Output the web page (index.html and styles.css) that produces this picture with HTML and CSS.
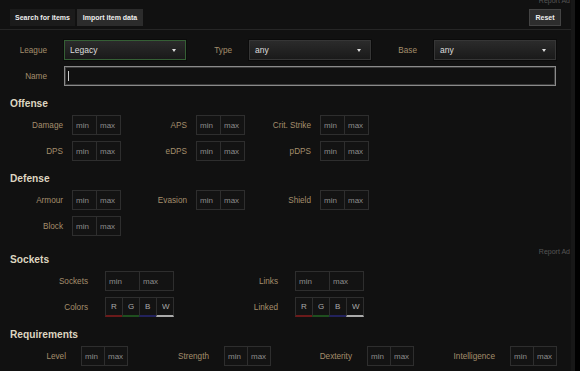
FILE: index.html
```html
<!DOCTYPE html>
<html lang="en">
  <head>
    <meta charset="UTF-8" />
    <meta name="viewport" content="width=device-width, initial-scale=1.0" />
    <title>Item search</title>
    <link rel="stylesheet" href="styles.css">
  </head>
  <body>
    <div class="page">

      <div class="ad ad-top">Report Ad</div>

      <div class="header">
        <div class="tabs">
          <div class="tab">Search for items</div>
          <div class="tab active">Import item data</div>
        </div>
        <button class="reset">Reset</button>
      </div>

      <!-- league / type / base -->
      <div class="filters">
        <div class="field">
          <div class="label">League</div>
          <div class="select selected">Legacy</div>
        </div>
        <div class="field">
          <div class="label">Type</div>
          <div class="select">any</div>
        </div>
        <div class="field">
          <div class="label">Base</div>
          <div class="select">any</div>
        </div>
      </div>

      <div class="field name">
        <div class="label">Name</div>
        <div class="text"><span class="caret"></span></div>
      </div>

      <!--offense-->
      <h2>Offense</h2>
      <div class="stats three">
        <div class="stat"><div class="label">Damage</div><div class="range"><input placeholder="min"><input placeholder="max"></div></div>
        <div class="stat"><div class="label">APS</div><div class="range"><input placeholder="min"><input placeholder="max"></div></div>
        <div class="stat"><div class="label">Crit. Strike</div><div class="range"><input placeholder="min"><input placeholder="max"></div></div>
      </div>
      <div class="stats three">
        <div class="stat"><div class="label">DPS</div><div class="range"><input placeholder="min"><input placeholder="max"></div></div>
        <div class="stat"><div class="label">eDPS</div><div class="range"><input placeholder="min"><input placeholder="max"></div></div>
        <div class="stat"><div class="label">pDPS</div><div class="range"><input placeholder="min"><input placeholder="max"></div></div>
      </div>

      <!--defense-->
      <h2>Defense</h2>
      <div class="stats three">
        <div class="stat"><div class="label">Armour</div><div class="range"><input placeholder="min"><input placeholder="max"></div></div>
        <div class="stat"><div class="label">Evasion</div><div class="range"><input placeholder="min"><input placeholder="max"></div></div>
        <div class="stat"><div class="label">Shield</div><div class="range"><input placeholder="min"><input placeholder="max"></div></div>
      </div>
      <div class="stats three">
        <div class="stat"><div class="label">Block</div><div class="range"><input placeholder="min"><input placeholder="max"></div></div>
      </div>

      <!--sockets-->
      <div class="ad ad-mid">Report Ad</div>
      <h2 class="after-ad">Sockets</h2>
      <div class="stats two">
        <div class="stat"><div class="label">Sockets</div><div class="range"><input placeholder="min"><input placeholder="max"></div></div>
        <div class="stat"><div class="label">Links</div><div class="range"><input placeholder="min"><input placeholder="max"></div></div>
      </div>
      <div class="stats two">
        <div class="stat">
          <div class="label">Colors</div>
          <div class="range colors"><input class="r" placeholder="R"><input class="g" placeholder="G"><input class="b" placeholder="B"><input class="w" placeholder="W"></div>
        </div>
        <div class="stat">
          <div class="label">Linked</div>
          <div class="range colors"><input class="r" placeholder="R"><input class="g" placeholder="G"><input class="b" placeholder="B"><input class="w" placeholder="W"></div>
        </div>
      </div>

      <!--requirements-->
      <h2>Requirements</h2>
      <div class="stats four">
        <div class="stat"><div class="label">Level</div><div class="range"><input placeholder="min"><input placeholder="max"></div></div>
        <div class="stat"><div class="label">Strength</div><div class="range"><input placeholder="min"><input placeholder="max"></div></div>
        <div class="stat"><div class="label">Dexterity</div><div class="range"><input placeholder="min"><input placeholder="max"></div></div>
        <div class="stat"><div class="label">Intelligence</div><div class="range"><input placeholder="min"><input placeholder="max"></div></div>
      </div>

    </div>
  </body>
</html>
```

FILE: styles.css
```css
body {
  margin: 0;
  background-color: #000;
  font-family: "Liberation Sans", Arial, sans-serif;
}
.page {
  width: 571px;
  height: 371px;
  overflow: hidden;
  background-color: #111;
  border-right: 4px solid #171717;
}

.ad {
  height: 7px;
  text-align: right;
  padding-right: 1px;
  font-size: 7px;
  line-height: 10px;
  color: #555;
}
.ad-top {
  height: 9px;
  line-height: 2px;
}
.ad-mid {
  margin-top: 11px;
}

.header {
  display: flex;
  justify-content: space-between;
  align-items: center;
  padding: 0 10px 3px 10px;
  border-bottom: 1px solid #262626;
}
.tabs {
  display: flex;
  gap: 2px;
}
.tab {
  width: 65px;
  height: 17px;
  line-height: 17px;
  text-align: center;
  font-size: 7px;
  font-weight: bold;
  color: #eee;
  background-color: #1b1b1b;
}
.tab.active {
  width: 66px;
  background-color: #2c2c2c;
}
.reset {
  width: 32px;
  height: 17px;
  padding: 0;
  font-family: inherit;
  font-size: 7px;
  font-weight: bold;
  color: #eee;
  background-color: #2d2d2d;
  border: 1px solid #444;
}

.label {
  text-align: right;
  font-size: 8.2px;
  color: #a48e6c;
}

.filters {
  display: grid;
  grid-template-columns: repeat(3, 185px);
  margin-top: 10px;
}
.field {
  display: grid;
  grid-template-columns: 47px 122px;
  column-gap: 17px;
  align-items: center;
}
.select {
  display: flex;
  justify-content: space-between;
  align-items: center;
  box-sizing: border-box;
  height: 20px;
  padding: 0 9px 0 5px;
  font-size: 8.5px;
  color: #ddd;
  border: 1px solid #363636;
  background: linear-gradient(#2b2b2b, #1a1a1a);
  box-shadow: 0 0 0 1px #0b0b0b;
}
.select.selected {
  border-color: #355f35;
}
.select::after {
  content: "";
  border-left: 2.5px solid transparent;
  border-right: 2.5px solid transparent;
  border-top: 3px solid #ddd;
}

.name {
  grid-template-columns: 47px 492px;
  margin-top: 6px;
}
.text {
  display: flex;
  align-items: center;
  box-sizing: border-box;
  height: 20px;
  padding-left: 3px;
  border: 1px solid #8a8a8a;
  box-shadow: inset 0 0 0 1px #3a3a3a;
  background-color: #111;
}
.caret {
  width: 1px;
  height: 10px;
  background-color: #ccc;
}

h2 {
  margin: 12px 0 6px 10px;
  font-size: 10.2px;
  line-height: 11px;
  font-weight: bold;
  color: #ddd5c0;
}
h2.after-ad {
  margin-top: 0;
}

.stats {
  display: grid;
  margin-bottom: 6px;
  --lab: 63px;
  --gap: 9px;
  --box: 25px;
  grid-template-columns: repeat(3, 124px);
}
.stats.two {
  --lab: 88px;
  --gap: 17px;
  --box: 35px;
  grid-template-columns: repeat(2, 190px);
}
.stats.four {
  --lab: 66px;
  --gap: 15px;
  --box: 24px;
  grid-template-columns: repeat(4, 143px);
}
.stat {
  display: grid;
  grid-template-columns: var(--lab) auto;
  column-gap: var(--gap);
  align-items: center;
}
.range {
  display: flex;
}
.range input {
  width: var(--box);
  height: 20px;
  box-sizing: border-box;
  margin: 0;
  padding: 0 0 0 3px;
  font-family: inherit;
  font-size: 8px;
  color: #aaa;
  background-color: #131313;
  border: 1px solid #2e2e2e;
  outline: none;
}
.range input + input {
  margin-left: -1px;
}
.range input::placeholder {
  color: #8c8c8c;
  opacity: 1;
}
.range.colors input {
  width: 18px;
  padding-left: 5px;
}
.colors input::placeholder {
  color: #aaa;
}
.colors .r { border-bottom: 2px solid #6b1a1a; }
.colors .g { border-bottom: 2px solid #1f4f1f; }
.colors .b { border-bottom: 2px solid #22225c; }
.colors .w { border-bottom: 2px solid #aaa; }
```
